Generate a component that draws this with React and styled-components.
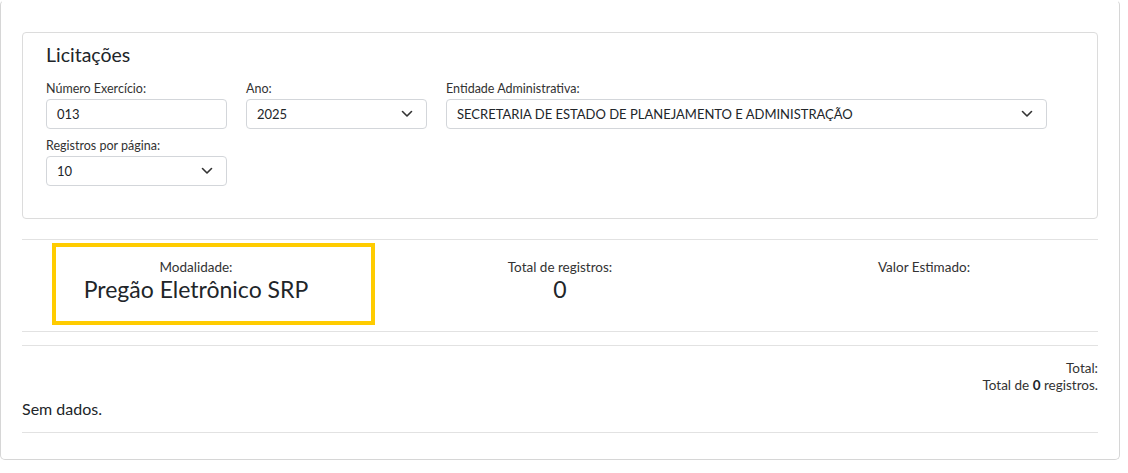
import React from "react";
import styled, {createGlobalStyle} from "styled-components";

const GlobalStyle = createGlobalStyle`
    html, body {
        margin: 0;
        padding: 0;
        background: #fff;
    }
    body {
        font-family: Lato, "Noto Sans", sans-serif;
        color: #212529;
    }
    * {
        box-sizing: border-box;
    }
`;

const Chevron = () => (
    <svg width="12" height="8" viewBox="0 0 12 8" fill="none">
        <polyline points="1.5,1.5 6,6 10.5,1.5" stroke="#333" strokeWidth="1.6" strokeLinecap="round" strokeLinejoin="round"/>
    </svg>
);

const Field = ({label, value, select}) => (
    <StyledField>
        <StyledLabel>{label}</StyledLabel>
        <StyledInput>
            <span>{value}</span>
            {select && <Chevron/>}
        </StyledInput>
    </StyledField>
);

const Stat = ({label, value, highlight}) => (
    <StyledStat>
        {highlight && <StyledHighlight/>}
        <p className="st-label">{label}</p>
        <p className="st-value">{value}</p>
    </StyledStat>
);

const App = () => {
    return (
        <>
            <GlobalStyle/>
            <StyledCard>
                <StyledPanel>
                    <StyledTitle>Licitações</StyledTitle>
                    <StyledForm>
                        <Field label="Número Exercício:" value="013"/>
                        <Field label="Ano:" value="2025" select/>
                        <Field label="Entidade Administrativa:" value="SECRETARIA DE ESTADO DE PLANEJAMENTO E ADMINISTRAÇÃO" select/>
                        <Field label="Registros por página:" value="10" select/>
                    </StyledForm>
                </StyledPanel>
                <StyledStats>
                    <Stat label="Modalidade:" value="Pregão Eletrônico SRP" highlight/>
                    <Stat label="Total de registros:" value="0"/>
                    <Stat label="Valor Estimado:" value=""/>
                </StyledStats>
                <StyledTable>
                    <StyledSummary>
                        <p>Total:</p>
                        <p>Total de <b>0</b> registros.</p>
                    </StyledSummary>
                    <StyledEmpty>Sem dados.</StyledEmpty>
                </StyledTable>
            </StyledCard>
        </>
    );
};

export default App;

const StyledCard = styled.div`
    width: 1120px;
    border: 1px solid #d6d6d6;
    border-top-color: transparent;
    border-radius: 5px;
    padding: 31px 21px 26px 21px;
`;

const StyledPanel = styled.div`
    border: 1px solid #dcdcdc;
    border-radius: 4px;
    padding: 10px 23px 32px;
    margin-bottom: 20px;
`;

const StyledTitle = styled.h2`
    margin: 0 0 13px;
    font-size: 19.5px;
    font-weight: 400;
    line-height: 24px;
    color: #212529;
`;

const StyledForm = styled.div`
    display: grid;
    grid-template-columns: 181px 181px 601px;
    column-gap: 19px;
    row-gap: 8px;
`;

const StyledField = styled.div`
    display: flex;
    flex-direction: column;
`;

const StyledLabel = styled.label`
    font-size: 12.5px;
    line-height: 17px;
    color: #333;
    margin-bottom: 2px;
`;

const StyledInput = styled.div`
    height: 30px;
    border: 1px solid #d3d6da;
    border-radius: 4px;
    padding: 0 13px 0 10px;
    display: flex;
    align-items: center;
    justify-content: space-between;
    font-size: 13px;
    color: #212529;
    
    >span {
        white-space: nowrap;
    }
`;

const StyledStats = styled.div`
    display: grid;
    grid-template-columns: repeat(3, 364px);
    justify-content: center;
    border-top: 1px solid #e2e2e2;
    border-bottom: 1px solid #e2e2e2;
    height: 93px;
    margin-bottom: 13px;
`;

const StyledStat = styled.div`
    position: relative;
    text-align: center;
    padding-top: 18px;
    
    >p {
        margin: 0;
    }
    >.st-label {
        font-size: 13.5px;
        line-height: 18px;
        color: #333;
    }
    >.st-value {
        font-size: 23px;
        line-height: 27px;
        color: #212529;
    }
`;

const StyledHighlight = styled.div`
    position: absolute;
    left: 38px;
    top: 3px;
    width: 323px;
    height: 82px;
    border: 4px solid #ffcc00;
`;

const StyledTable = styled.div`
    border-top: 1px solid #e2e2e2;
    border-bottom: 1px solid #e2e2e2;
    padding: 14px 0 13px;
`;

const StyledSummary = styled.div`
    text-align: right;
    font-size: 13.5px;
    line-height: 17px;
    color: #333;
    
    >p {
        margin: 0;
    }
    b {
        font-weight: 700;
        color: #212529;
    }
`;

const StyledEmpty = styled.p`
    margin: 5px 0 0;
    font-size: 16px;
    line-height: 20px;
    color: #212529;
`;
